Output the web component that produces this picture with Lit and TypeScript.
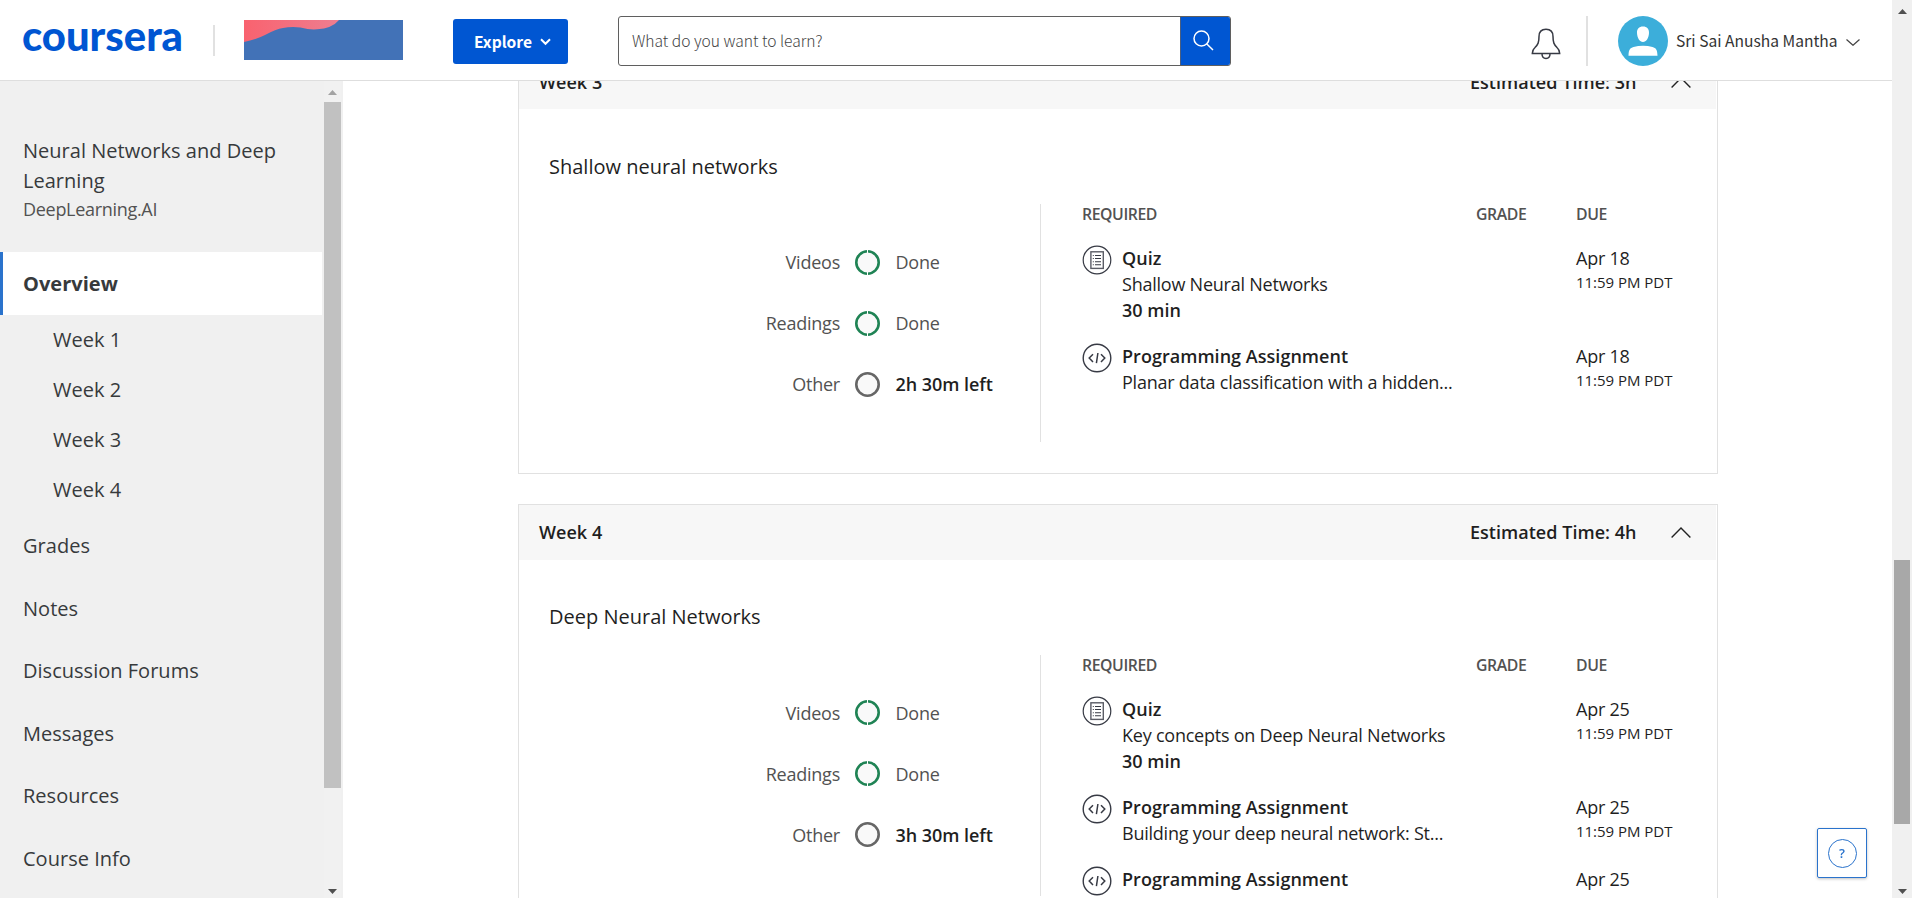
import { LitElement, html, css, svg } from "lit";
import { customElement, property } from "lit/decorators.js";
import { classMap } from "lit/directives/class-map.js";

interface Progress { label: string; value: string; done: boolean; }
interface Task { kind: "quiz" | "code"; title: string; name: string; time?: string; due: string; }
interface Week { title: string; estimate: string; topic: string; progress: Progress[]; tasks: Task[]; }

const WEEKS: Week[] = [
  {
    title: "Week 3", estimate: "Estimated Time: 3h", topic: "Shallow neural networks",
    progress: [
      { label: "Videos", value: "Done", done: true },
      { label: "Readings", value: "Done", done: true },
      { label: "Other", value: "2h 30m left", done: false },
    ],
    tasks: [
      { kind: "quiz", title: "Quiz", name: "Shallow Neural Networks", time: "30 min", due: "Apr 18" },
      { kind: "code", title: "Programming Assignment", name: "Planar data classification with a hidden...", due: "Apr 18" },
    ],
  },
  {
    title: "Week 4", estimate: "Estimated Time: 4h", topic: "Deep Neural Networks",
    progress: [
      { label: "Videos", value: "Done", done: true },
      { label: "Readings", value: "Done", done: true },
      { label: "Other", value: "3h 30m left", done: false },
    ],
    tasks: [
      { kind: "quiz", title: "Quiz", name: "Key concepts on Deep Neural Networks", time: "30 min", due: "Apr 25" },
      { kind: "code", title: "Programming Assignment", name: "Building your deep neural network: St...", due: "Apr 25" },
      { kind: "code", title: "Programming Assignment", name: "", due: "Apr 25" },
    ],
  },
];

const quizIcon = html`<svg width="30" height="30" viewBox="0 0 30 30" fill="none" stroke="#373a44">
  <circle cx="15" cy="15" r="13.8" stroke-width="1.2"/>
  <rect x="8.9" y="6.8" width="12.4" height="16.6" stroke-width="1.4" stroke="#5b5d66"/>
  <path d="M13 10.5h6M13 13.5h6M13 16.7h6M13 19.7h6" stroke-width="1.1"/>
  <path d="M10.8 10.5h1M10.8 13.5h1M10.8 16.7h1M10.8 19.7h1" stroke-width="1.1"/></svg>`;
const codeIcon = html`<svg width="30" height="30" viewBox="0 0 30 30" fill="none" stroke="#373a44">
  <circle cx="15" cy="15" r="13.8" stroke-width="1.4"/>
  <path d="M11 11.2l-3.8 3.9 3.8 3.9M19 11.2l3.8 3.9-3.8 3.9M15.9 10l-1.5 10.2" stroke-width="1.5"/></svg>`;
const ring = (done: boolean) => html`<svg class="ring" width="25" height="25" viewBox="0 0 25 25">
  <circle cx="12.5" cy="12.5" r="11.2" fill="#f9f9f9" stroke=${done ? "#1f8354" : "#666"} stroke-width="2.6"/>
  ${done ? svg`<path d="M12.5 0v3M12.5 22v3" stroke="#fff" stroke-width="1"/>` : ""}</svg>`;

@customElement("week-card")
class WeekCard extends LitElement {
  @property({ attribute: false }) week!: Week;
  static styles = css`
    :host { display: block; box-sizing: border-box; width: 1200px; border: 1px solid #e1e1e1; padding-bottom: 31px; background: #fff; color: #1f1f1f; letter-spacing: -0.23px; }
    svg { display: block; flex: none; }
    .head { height: 55px; box-sizing: border-box; display: flex; align-items: center; background: #f7f7f7; padding: 0 25px 1px 20px; margin-right: 1px; font-weight: 600; letter-spacing: 0.03px; }
    :host(:first-child) .head { padding-bottom: 0; padding-top: 1px; }
    .head .estimate { margin-left: auto; margin-right: 34.5px; }
    .topic { font-size: 20px; line-height: 30px; padding: 42px 0 23px 30px; letter-spacing: 0; }
    :host(:first-child) .topic { padding: 43px 0 22px 30px; }
    .cols { display: flex; min-height: 238px; }
    .left { width: 521px; padding-top: 27px; box-sizing: border-box; }
    .row { display: flex; align-items: center; height: 61px; color: #525252; }
    .label { width: 321px; text-align: right; margin-right: 15px; }
    .ring { margin-right: 15.5px; }
    :host(:first-child) .ring { margin-top: 1px; }
    .value.left-over { color: #1f1f1f; font-weight: 600; letter-spacing: -0.05px; }
    .right { border-left: 1px solid #e1e1e1; padding-left: 41px; flex: 1; display: flex; flex-direction: column; gap: 20px; }
    .line { display: grid; grid-template-columns: 394px 100px 130px; }
    .titles { font-size: 15.8px; font-weight: 600; line-height: 19px; color: #525252; padding: 1px 0; letter-spacing: -0.42px; }
    .task { display: flex; gap: 10px; }
    .task b, .task strong { display: block; font-weight: 600; letter-spacing: 0.03px; }
    .due { white-space: nowrap; }
    .due small { display: block; font-size: 15px; line-height: 22px; letter-spacing: -0.03px; }
  `;
  render() {
    const w = this.week;
    return html`
      <div class="head"><span>${w.title}</span><span class="estimate">${w.estimate}</span>
        <svg width="20" height="11" viewBox="0 0 20 11" fill="none" stroke="#222" stroke-width="1.4"><path d="M.6 10.4L10 1l9.4 9.4"/></svg></div>
      <div class="topic">${w.topic}</div>
      <div class="cols">
        <div class="left">${w.progress.map((p) => html`<div class="row"><span class="label">${p.label}</span>${ring(p.done)}<span class=${classMap({ value: true, "left-over": !p.done })}>${p.value}</span></div>`)}</div>
        <div class="right">
          <div class="line titles"><span>REQUIRED</span><span>GRADE</span><span>DUE</span></div>
          ${w.tasks.map((t) => html`<div class="line">
            <div class="task">${t.kind === "quiz" ? quizIcon : codeIcon}<div><b>${t.title}</b>${t.name}${t.time ? html`<strong>${t.time}</strong>` : ""}</div></div>
            <div></div>
            <div class="due">${t.due}${t.name ? html`<small>11:59 PM PDT</small>` : ""}</div>
          </div>`)}
        </div>
      </div>`;
  }
}

@customElement("app-root")
class AppRoot extends LitElement {
  static styles = css`
    :host { display: flex; height: 898px; overflow: hidden; background: #fff; font: 400 18px/26px "Open Sans", sans-serif; color: #1f1f1f; }
    svg { display: block; flex: none; }
    .page { flex: 1; display: flex; flex-direction: column; min-width: 0; }
    header { height: 80px; flex: none; display: flex; align-items: center; border-bottom: 1px solid #dedede; font: 400 15.6px/24px "Noto Sans CJK JP", "Noto Sans", sans-serif; }
    .logo { margin-left: 22px; overflow: visible; }
    .rule { width: 2px; background: #e1e1e1; flex: none; }
    .brand-rule { height: 31px; margin: 1px 0 0 29px; }
    .partner { margin-left: 29px; }
    .explore { margin-left: 50px; margin-top: 3px; width: 115px; height: 45px; box-sizing: border-box; border-radius: 3px; background: #0056d2; color: #fff; font-weight: 700; display: flex; align-items: center; padding: 0 0 2px 21px; gap: 8px; }
    .explore svg { margin-top: 2px; }
    .search { margin: 2px 0 0 50px; width: 613px; height: 50px; box-sizing: border-box; border: 1px solid #5f5f5f; border-radius: 3px; display: flex; align-items: center; justify-content: space-between; padding-left: 13px; font-weight: 300; color: #444; overflow: hidden; }
    .search > span { margin-bottom: 2px; }
    .go { width: 50px; height: 48px; box-sizing: border-box; border-left: 1px solid #4c5f80; background: #0056d2; display: flex; align-items: center; justify-content: center; padding: 0 5px 1px 0; }
    .bell { margin-left: 300px; margin-top: 8px; }
    .user-rule { height: 50px; margin: 2px 30px 0 25px; }
    .avatar { margin-top: 2px; }
    .name { margin: 0 8px 0 8px; white-space: nowrap; color: #333; }
    .chev { margin-top: 4px; }
    .body { flex: 1; display: flex; min-height: 0; overflow: hidden; }
    aside { width: 343px; flex: none; display: flex; background: #f0f0f0; color: #373a3c; }
    nav { width: 322px; font-size: 20px; letter-spacing: 0.02px; }
    .course { padding: 55px 40px 29px 23px; line-height: 30px; }
    .school { font-size: 18px; line-height: 27px; letter-spacing: -0.3px; color: #525252; }
    .item { line-height: 61.6px; padding: 0 0 1px 23px; }
    .item.on { background: #fff; border-left: 3px solid #2a73cc; padding: 1px 0 0 20px; line-height: 62px; font-weight: 700; }
    .week { line-height: 49px; padding: 0 0 1px 53px; }
    .track { display: flex; flex-direction: column; align-items: center; }
    .inner { width: 17px; margin-left: 2px; background: #f1f1f1; }
    .inner .thumb { width: 17px; height: 686px; background: #c1c1c1; margin: 7px 0 101px; }
    .inner svg { margin-top: 9px; }
    .inner .thumb + svg { margin-top: 0; }
    main { flex: 1; padding-left: 175px; display: flex; flex-direction: column; gap: 30px; min-width: 0; }
    main week-card { flex: none; }
    main week-card:first-child { margin-top: -28px; }
    .outer { width: 20px; flex: none; background: #f0f0f0; }
    .outer .thumb { width: 16px; height: 264px; background: #a8a8a8; margin: 546px 0 65px; }
    .outer svg:first-child { margin-top: 9px; }
    .help { position: fixed; left: 1817px; top: 828px; width: 50px; height: 50px; box-sizing: border-box; border: 1px solid #2a73cc; border-radius: 2px; background: #fff; box-shadow: 0 1px 3px rgba(0,0,0,.25); display: flex; align-items: center; justify-content: center; }
    .help span { width: 29px; height: 29px; box-sizing: border-box; border: 1.4px solid #2a73cc; border-radius: 50%; text-align: center; font-size: 13px; line-height: 27px; font-weight: 600; color: #2a73cc; }
  `;
  render() {
    const arrow = (up: boolean, c: string) => html`<svg width="9" height="5" viewBox="0 0 9 5"><path d=${up ? "M0 5L4.5 0L9 5z" : "M0 0L4.5 5L9 0z"} fill=${c}/></svg>`;
    return html`
      <div class="page">
        <header>
          <svg class="logo" width="162" height="60" viewBox="0 0 162 60"><text x="0" y="41.4" font-family="Lato" font-weight="900" font-size="42" textLength="161" lengthAdjust="spacingAndGlyphs" fill="#0056d2">coursera</text></svg>
          <div class="rule brand-rule"></div>
          <svg class="partner" width="159" height="40" viewBox="0 0 159 40">
            <defs><linearGradient id="g" x1="0" x2="1"><stop offset="0" stop-color="#f9626f"/><stop offset="1" stop-color="#ee7e90"/></linearGradient></defs>
            <rect width="159" height="40" fill="#4272b7"/>
            <path d="M0 0V22Q11 20 21 15Q32 9 39 8Q47 6.5 56.5 7.5Q66 10 73 9.3Q88 8.5 95 0z" fill="url(#g)"/></svg>
          <div class="explore">Explore<svg width="11" height="8" viewBox="0 0 11 8" fill="none" stroke="#fff" stroke-width="2"><path d="M1 1.3l4.5 4.5L10 1.3"/></svg></div>
          <div class="search"><span>What do you want to learn?</span><div class="go">
            <svg width="21" height="21" viewBox="0 0 21 21" fill="none" stroke="#fff" stroke-width="1.5"><circle cx="8.5" cy="8.5" r="7.5"/><path d="M13.6 13.8l6.4 6.2"/></svg></div></div>
          <svg class="bell" width="30" height="32" viewBox="0 0 30 32" fill="none" stroke="#373a44" stroke-width="1.5"><path d="M15 1.2C10.5 1.2 8 4.2 8 8.5C8 14.5 7 16.5 4 19.5C2 21.3 1.3 22 1.3 25.5H28.7C28.7 22 28 21.3 26 19.5C23 16.5 22 14.5 22 8.5C22 4.2 19.5 1.2 15 1.2zM11 25.8c0 3 1.7 4.7 4 4.7s4-1.7 4-4.7"/></svg>
          <div class="rule user-rule"></div>
          <svg class="avatar" width="50" height="50" viewBox="0 0 50 50"><circle cx="25" cy="25" r="25" fill="#3caeda"/><path d="M25 10.5c4 0 6.2 2.5 6 6.5c-.2 5-2.8 9-6 9s-5.8-4-6-9c-.2-4 2-6.5 6-6.5zM10.5 39.7c.2-6 1.5-7.7 5-8.6c6-1.8 13-1.8 19 0c3.5.9 4.8 2.6 5 8.6z" fill="#fff"/></svg>
          <span class="name">Sri Sai Anusha Mantha</span>
          <svg class="chev" width="14" height="7" viewBox="0 0 14 7" fill="none" stroke="#444" stroke-width="1.2"><path d="M.5.5L7 6.3L13.5.5"/></svg>
        </header>
        <div class="body">
          <aside>
            <nav>
              <div class="course">Neural Networks and Deep Learning<div class="school">DeepLearning.AI</div></div>
              <div class="item on">Overview</div>
              ${[1, 2, 3, 4].map((n) => html`<div class="week">Week ${n}</div>`)}
              ${["Grades", "Notes", "Discussion Forums", "Messages", "Resources", "Course Info"].map((t) => html`<div class="item">${t}</div>`)}
            </nav>
            <div class="track inner">${arrow(true, "#a3a3a3")}<div class="thumb"></div>${arrow(false, "#505050")}</div>
          </aside>
          <main>${WEEKS.map((w) => html`<week-card .week=${w}></week-card>`)}</main>
        </div>
      </div>
      <div class="track outer">${arrow(true, "#505050")}<div class="thumb"></div>${arrow(false, "#505050")}</div>
      <div class="help"><span>?</span></div>`;
  }
}
